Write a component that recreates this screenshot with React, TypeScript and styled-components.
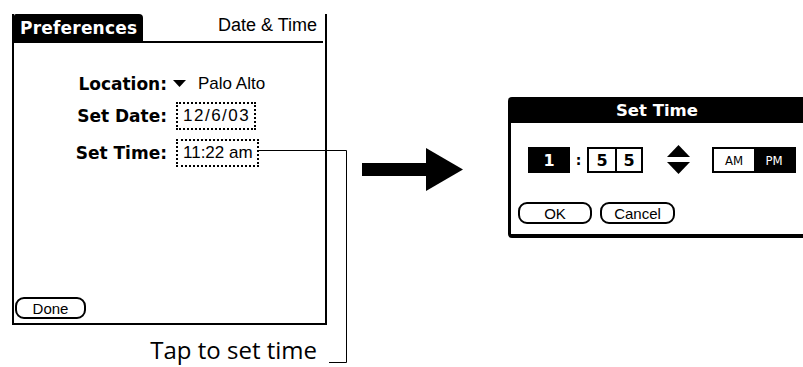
import React from "react";
import styled, { createGlobalStyle } from "styled-components";

const Global = createGlobalStyle`
  html, body { margin: 0; padding: 0; background: #fff; }
  body { width: 803px; height: 367px; overflow: hidden; }
  #root { width: 803px; height: 367px; }
`;

const Page = styled.div`
  position: relative;
  width: 803px;
  height: 367px;
  display: flex;
  align-items: flex-start;
  padding: 14px 0 0 12px;
  box-sizing: border-box;
  overflow: hidden;
  font-family: "Liberation Sans", Arial, sans-serif;
  color: #000;
`;

const LeftCol = styled.div`
  display: flex;
  flex-direction: column;
  width: 315px;
  flex: none;
`;

const Screen = styled.div`
  width: 315px;
  height: 311px;
  box-sizing: border-box;
  border: 2px solid #000;
  border-top: none;
  display: flex;
  flex-direction: column;
`;

const Header = styled.div`
  display: flex;
  align-items: flex-end;
  justify-content: space-between;
  height: 27px;
  border-bottom: 2px solid #000;
  margin-right: 2px;
`;

const Tab = styled.div`
  background: #000;
  color: #fff;
  height: 27px;
  width: 129px;
  box-sizing: border-box;
  padding: 0 0 0 6px;
  display: flex;
  align-items: center;
  font-family: "DejaVu Sans", sans-serif;
  font-weight: bold;
  font-size: 17px;
  border-top-left-radius: 2px;
  border-top-right-radius: 4px;
  letter-spacing: 0.2px;
`;

const FormTitle = styled.div`
  font-size: 18px;
  padding: 0 6px 5px 0;
`;

const Body = styled.div`
  flex: 1;
  display: flex;
  flex-direction: column;
  padding-top: 27px;
`;

const Row = styled.div<{ $top: number }>`
  display: grid;
  grid-template-columns: 153px auto;
  column-gap: 6px;
  align-items: center;
  height: 28px;
  margin-top: ${(p) => p.$top}px;
`;

const Label = styled.div`
  text-align: right;
  font-family: "DejaVu Sans", sans-serif;
  font-weight: bold;
  font-size: 17px;
`;

const Value = styled.div`
  display: flex;
  align-items: center;
  gap: 12px;
  font-size: 17px;
`;

const DotBox = styled.div<{ $w: number; $ls: number }>`
  width: ${(p) => p.$w}px;
  height: 28px;
  box-sizing: border-box;
  border: 2px dotted #000;
  display: flex;
  align-items: center;
  padding-left: 5px;
  margin-left: 3px;
  font-size: 17px;
  letter-spacing: ${(p) => p.$ls}px;
`;

const Footer = styled.div`
  padding: 0 0 4px 1px;
`;

const PalmButton = styled.div<{ $w: number }>`
  width: ${(p) => p.$w}px;
  height: 22px;
  box-sizing: border-box;
  border: 2px solid #000;
  border-radius: 9px;
  display: flex;
  align-items: center;
  justify-content: center;
  font-size: 15px;
`;

const Caption = styled.div`
  align-self: flex-end;
  margin: 13px 10px 0 0;
  font-size: 24px;
  line-height: 24px;
  font-family: "Open Sans", sans-serif;
`;

const ArrowWrap = styled.div`
  margin: 134px 0 0 35px;
  flex: none;
  line-height: 0;
`;

const Dialog = styled.div`
  margin: 83px 0 0 45px;
  width: 320px;
  flex: none;
  display: flex;
  flex-direction: column;
`;

const DialogTitle = styled.div`
  background: #000;
  color: #fff;
  height: 26px;
  border-top-left-radius: 4px;
  display: flex;
  align-items: center;
  justify-content: center;
  padding-right: 22px;
  font-family: "DejaVu Sans", sans-serif;
  font-weight: bold;
  font-size: 16.5px;
`;

const DialogBody = styled.div`
  border-left: 3px solid #000;
  border-bottom: 4px solid #000;
  border-bottom-left-radius: 4px;
  height: 115px;
  box-sizing: border-box;
  padding: 24px 0 0 7px;
  display: flex;
  flex-direction: column;
`;

const TimeRow = styled.div`
  display: flex;
  align-items: center;
  height: 26px;
  padding-left: 10px;
`;

const Digit = styled.div<{ $inv?: boolean; $w: number }>`
  width: ${(p) => p.$w}px;
  height: 26px;
  box-sizing: border-box;
  background: ${(p) => (p.$inv ? "#000" : "#fff")};
  color: ${(p) => (p.$inv ? "#fff" : "#000")};
  display: flex;
  align-items: center;
  justify-content: center;
  font-family: "DejaVu Sans", sans-serif;
  font-weight: bold;
  font-size: 16px;
`;

const DigitGroup = styled.div`
  display: flex;
  border: 2px solid #000;
  & > div { height: 22px; }
  & > div + div { border-left: 2px solid #000; }
`;

const Colon = styled.div`
  width: 17px;
  text-align: center;
  font-family: "DejaVu Sans", sans-serif;
  font-weight: bold;
  font-size: 14px;
`;

const Spinner = styled.div`
  margin: 0 22px 0 24px;
  line-height: 0;
`;

const AmPm = styled.div`
  display: flex;
  border: 2px solid #000;
  height: 26px;
  box-sizing: border-box;
`;

const Seg = styled.div<{ $on?: boolean }>`
  width: 40px;
  display: flex;
  align-items: center;
  justify-content: center;
  background: ${(p) => (p.$on ? "#000" : "#fff")};
  color: ${(p) => (p.$on ? "#fff" : "#000")};
  font-size: 13px;
  font-family: "DejaVu Sans Condensed", "DejaVu Sans", sans-serif;
`;

const ButtonRow = styled.div`
  display: flex;
  gap: 8px;
  margin-top: 29px;
`;

const Overlay = styled.svg`
  position: absolute;
  left: 0;
  top: 0;
  pointer-events: none;
`;

export default function App() {
  return (
    <>
      <Global />
      <Page>
        <LeftCol>
          <Screen>
            <Header>
              <Tab>Preferences</Tab>
              <FormTitle>Date &amp; Time</FormTitle>
            </Header>
            <Body>
              <Row $top={0}>
                <Label>Location:</Label>
                <Value>
                  <svg width="13" height="8" viewBox="0 0 13 8">
                    <polygon points="0,0 13,0 6.5,7" fill="#000" />
                  </svg>
                  <span>Palo Alto</span>
                </Value>
              </Row>
              <Row $top={4}>
                <Label>Set Date:</Label>
                <Value>
                  <DotBox $w={80} $ls={1.5}>12/6/03</DotBox>
                </Value>
              </Row>
              <Row $top={9}>
                <Label>Set Time:</Label>
                <Value>
                  <DotBox $w={83} $ls={0}>11:22 am</DotBox>
                </Value>
              </Row>
            </Body>
            <Footer>
              <PalmButton $w={71}>Done</PalmButton>
            </Footer>
          </Screen>
          <Caption>Tap to set time</Caption>
        </LeftCol>

        <ArrowWrap>
          <svg width="101" height="43" viewBox="0 0 101 43">
            <rect x="0" y="15" width="66" height="13" fill="#000" />
            <polygon points="64,0 101,21.5 64,43" fill="#000" />
          </svg>
        </ArrowWrap>

        <Dialog>
          <DialogTitle>Set Time</DialogTitle>
          <DialogBody>
            <TimeRow>
              <Digit $inv $w={42}>1</Digit>
              <Colon>:</Colon>
              <DigitGroup>
                <Digit $w={26}>5</Digit>
                <Digit $w={26}>5</Digit>
              </DigitGroup>
              <Spinner>
                <svg width="23" height="30" viewBox="0 0 23 30">
                  <polygon points="11.5,0 23,12 0,12" fill="#000" />
                  <polygon points="0,17 23,17 11.5,29" fill="#000" />
                </svg>
              </Spinner>
              <AmPm>
                <Seg>AM</Seg>
                <Seg $on>PM</Seg>
              </AmPm>
            </TimeRow>
            <ButtonRow>
              <PalmButton $w={74}>OK</PalmButton>
              <PalmButton $w={75}>Cancel</PalmButton>
            </ButtonRow>
          </DialogBody>
        </Dialog>

        <Overlay width="803" height="367">
          <polyline
            points="258,150.5 346.5,150.5 346.5,362.5 329,362.5"
            fill="none"
            stroke="#000"
            strokeWidth="1"
          />
        </Overlay>
      </Page>
    </>
  );
}
